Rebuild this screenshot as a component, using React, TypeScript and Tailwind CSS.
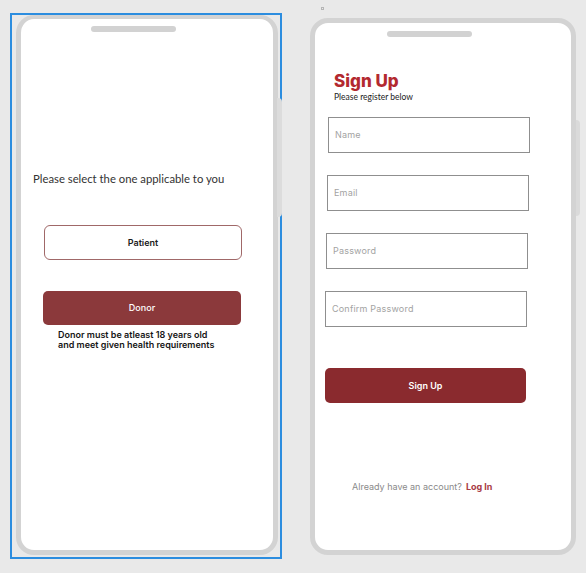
import React from 'react';

const body = { fontFamily: 'Lato, "Open Sans", sans-serif' };
const geo = { fontFamily: 'Inter, "Noto Sans", sans-serif' };

function Field({ label, ml }: { label: string; ml: string }) {
  return (
    <div className={`${ml} w-[202px] h-[36px] border border-[#8f8f8f] bg-white flex items-center px-[6px]`}>
      <span className="text-[9px] text-[#a3a3a3] tracking-[0.2px]" style={geo}>
        {label}
      </span>
    </div>
  );
}

export default function App() {
  return (
    <div className="w-[586px] h-[573px] bg-[#e9e9e9] flex overflow-hidden">
      {/* left phone, selected */}
      <div className="ml-[10px] mt-[13px] w-[272px] h-[546px] border-2 border-[#2c8ddf] pl-[4px]">
        <div className="relative w-[262px] h-[540px] rounded-[18px] border-[5px] border-t-[4px] border-[#d3d3d3] bg-white">
          <div className="absolute -right-[9px] top-[79px] w-[5px] h-[119px] bg-[#dcdcdc] rounded-r-sm" />
          <div className="flex flex-col">
            <div className="ml-[70px] mt-[7px] w-[85px] h-[6px] rounded-full bg-[#d2d2d2]" />
            <p className="ml-[12px] mt-[139px] text-[11.3px] leading-[16px] text-[#333]" style={body}>
              Please select the one applicable to you
            </p>
            <button className="ml-[23px] mt-[38px] w-[198px] h-[35px] rounded-[6px] border border-[#a06868] bg-white text-[9px] font-semibold text-[#1b1b1b]" style={geo}>
              Patient
            </button>
            <button className="ml-[22px] mt-[31px] w-[198px] h-[34px] rounded-[5px] bg-[#8b393b] text-[9px] font-medium text-white" style={geo}>
              Donor
            </button>
            <p className="ml-[37px] mt-[5px] text-[9px] leading-[10px] font-semibold text-[#151515]" style={geo}>
              Donor must be atleast 18 years old
              <br />
              and meet given health requirements
            </p>
          </div>
        </div>
      </div>

      {/* right phone */}
      <div className="relative ml-[28px] mt-[18px] w-[266px] h-[537px]">
        <div className="absolute left-[11px] -top-[11px] w-[3px] h-[3px] border border-[#b5b5b5]" />
        <div className="absolute -right-[4px] top-[102px] w-[6px] h-[96px] bg-[#dadada] rounded-r-sm" />
        <div className="relative h-full rounded-[18px] border-[5px] border-[#d3d3d3] bg-white flex flex-col">
          <div className="ml-[72px] mt-[8px] w-[85px] h-[6px] rounded-full bg-[#d2d2d2]" />
          <h1 className="ml-[19px] mt-[36px] text-[17px] leading-[17px] font-extrabold text-[#b3292f]" style={geo}>
            Sign Up
          </h1>
          <p className="ml-[19px] mt-[2px] text-[8.5px] leading-[11px] text-[#222]" style={body}>
            Please register below
          </p>
          <div className="mt-[14px] flex flex-col gap-[22px]">
            <Field label="Name" ml="ml-[13px]" />
            <Field label="Email" ml="ml-[12px]" />
            <Field label="Password" ml="ml-[11px]" />
            <Field label="Confirm Password" ml="ml-[10px]" />
          </div>
          <button className="ml-[10px] mt-[41px] w-[201px] h-[35px] rounded-[5px] bg-[#8a2a2e] text-[9px] font-semibold text-white" style={geo}>
            Sign Up
          </button>
          <p className="mt-[78px] ml-[37px] text-[9px] leading-[12px] text-[#8a8a8a]" style={geo}>
            Already have an account?
            <span className="ml-[4px] font-bold text-[#a83a44]">Log In</span>
          </p>
        </div>
      </div>
    </div>
  );
}
